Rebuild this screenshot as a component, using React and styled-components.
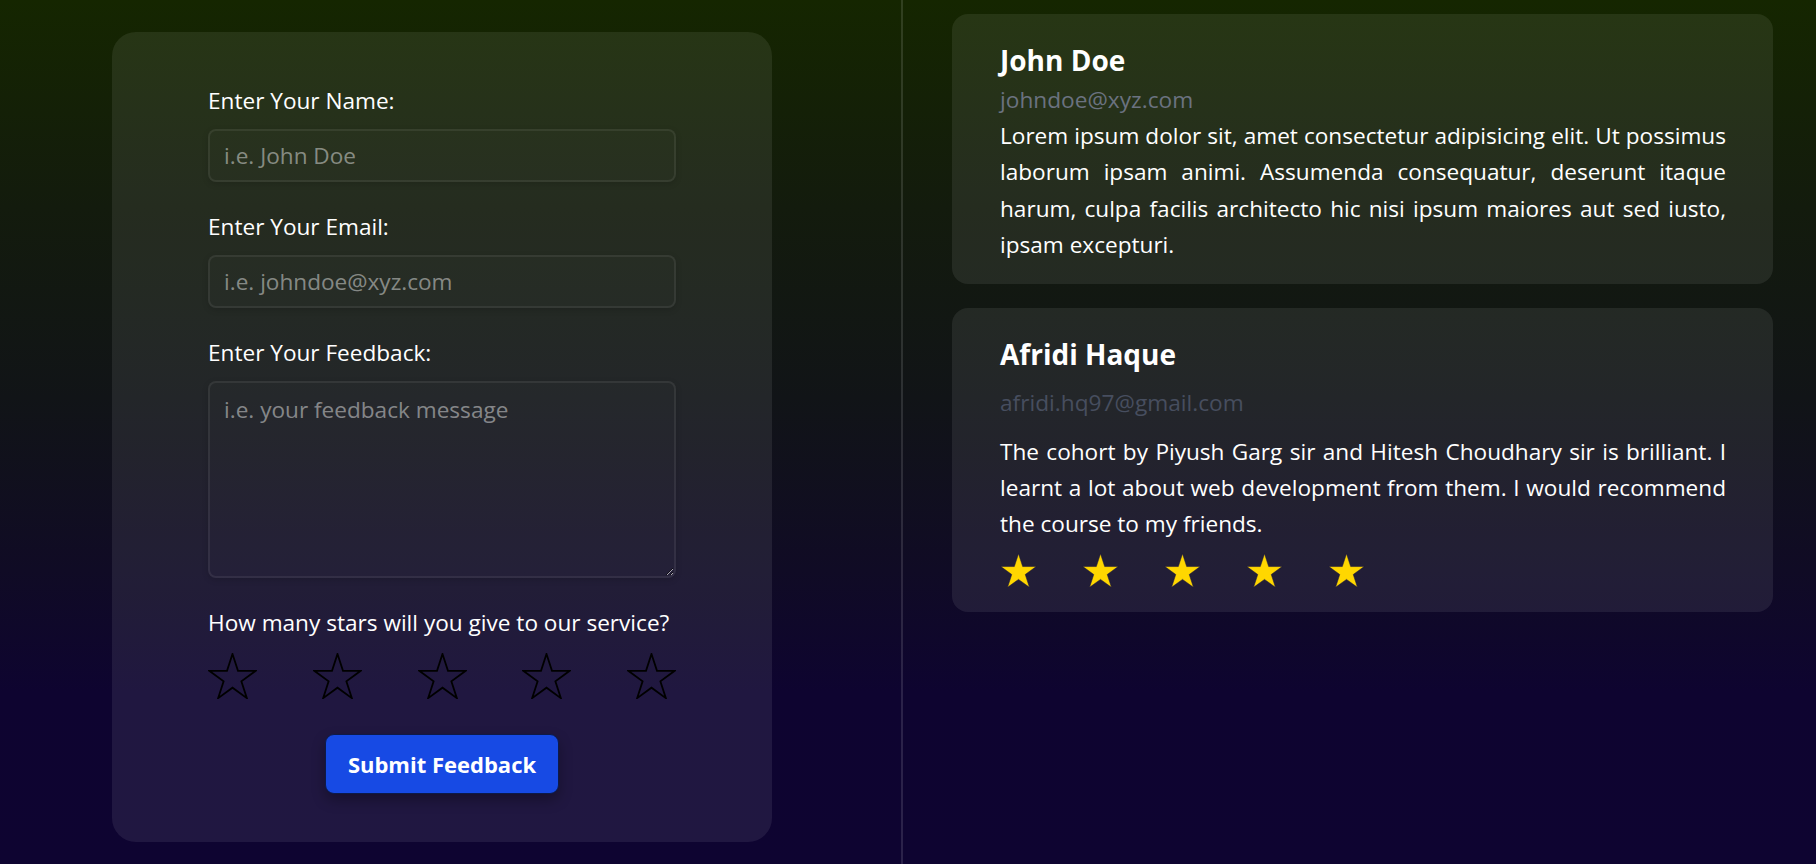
import React from 'react'
import styled, { createGlobalStyle } from 'styled-components'

const reviews = [
    {
        name: 'John Doe',
        email: 'johndoe@xyz.com',
        text: 'Lorem ipsum dolor sit, amet consectetur adipisicing elit. Ut possimus laborum ipsam animi. Assumenda consequatur, deserunt itaque harum, culpa facilis architecto hic nisi ipsum maiores aut sed iusto, ipsam excepturi.',
        stars: 0,
        sample: true,
    },
    {
        name: 'Afridi Haque',
        email: 'afridi.hq97@gmail.com',
        text: 'The cohort by Piyush Garg sir and Hitesh Choudhary sir is brilliant. I learnt a lot about web development from them. I would recommend the course to my friends.',
        stars: 5,
        sample: false,
    },
]

const STAR_POINTS = '50,0 61.81,36.32 100,36.33 69.1,58.77 80.9,95.1 50,72.65 19.1,95.1 30.9,58.77 0,36.33 38.19,36.32'

function Star({ width, height, filled }) {
    return (
        <svg width={width} height={height} viewBox="-2 -2 104 99" aria-hidden="true">
            <polygon
                points={STAR_POINTS}
                fill={filled ? '#ffd700' : 'none'}
                stroke={filled ? '#1b1740' : '#000'}
                strokeWidth={filled ? 1.5 : 3.8}
                strokeLinejoin="miter"
            />
        </svg>
    )
}

export default function App() {
    return (
        <>
            <GlobalStyle />
            <Page>
                <FormSection>
                    <FormCard onSubmit={e => e.preventDefault()}>
                        <Field>
                            <Label htmlFor="name">Enter Your Name:</Label>
                            <Input id="name" type="text" placeholder="i.e. John Doe" />
                        </Field>
                        <Field>
                            <Label htmlFor="email">Enter Your Email:</Label>
                            <Input id="email" type="email" placeholder="i.e. johndoe@xyz.com" />
                        </Field>
                        <Field>
                            <Label htmlFor="feedback">Enter Your Feedback:</Label>
                            <TextArea id="feedback" placeholder="i.e. your feedback message" />
                        </Field>
                        <Field $last>
                            <Label as="p">How many stars will you give to our service?</Label>
                            <RatingRow>
                                {[1, 2, 3, 4, 5].map(n => (
                                    <StarButton key={n} type="button" aria-label={`${n} star`}>
                                        <Star width={49} height={46} />
                                    </StarButton>
                                ))}
                            </RatingRow>
                        </Field>
                        <SubmitButton type="submit">Submit Feedback</SubmitButton>
                    </FormCard>
                </FormSection>

                <Divider />

                <ReviewList>
                    {reviews.map(r => (
                        <ReviewCard key={r.email} $sample={r.sample}>
                            <ReviewName>{r.name}</ReviewName>
                            <ReviewEmail $sample={r.sample}>{r.email}</ReviewEmail>
                            <ReviewText $sample={r.sample}>{r.text}</ReviewText>
                            {r.stars > 0 && (
                                <StarRow>
                                    {Array.from({ length: r.stars }).map((_, i) => (
                                        <Star key={i} width={37} height={35} filled />
                                    ))}
                                </StarRow>
                            )}
                        </ReviewCard>
                    ))}
                </ReviewList>
            </Page>
        </>
    )
}

const GlobalStyle = createGlobalStyle`
    *{
        box-sizing:border-box;
    }
    html, body{
        margin:0;
        padding:0;
    }
    body{
        font-family:"Open Sans", "Noto Sans", sans-serif;
        color:#fff;
        background:#0e0431;
    }
`

const Page = styled.main`
    display:grid;
    grid-template-columns:901px 2px 1fr;
    min-height:100vh;
    background:linear-gradient(180deg, #152600 0%, #131b0d 24%, #111417 46%, #100b25 66%, #0e0430 80%, #0e0431 100%);
`

const FormSection = styled.section`
    padding:32px 0 23px 112px;
`

const FormCard = styled.form`
    width:660px;
    padding:55px 96px 48px;
    border-radius:24px;
    background:rgba(255,255,255,0.08);
    display:flex;
    flex-direction:column;
`

const Field = styled.div`
    display:flex;
    flex-direction:column;
    gap:14px;
    margin-bottom:${p => (p.$last ? '35px' : '31px')};
`

const Label = styled.label`
    margin:0;
    font-size:22.6px;
    line-height:28px;
    color:#fff;
`

const fieldStyles = `
    width:100%;
    font-family:inherit;
    font-size:22.6px;
    color:#fff;
    background:rgba(255,255,255,0.01);
    border:2px solid rgba(255,255,255,0.07);
    border-radius:8px;
    box-shadow:0 2px 6px rgba(0,0,0,0.15);
    outline:none;

    &::placeholder{
        color:rgba(255,255,255,0.45);
    }
`

const Input = styled.input`
    ${fieldStyles}
    height:53px;
    padding:0 14px;
`

const TextArea = styled.textarea`
    ${fieldStyles}
    height:197px;
    padding:12px 14px;
    line-height:30px;
    resize:vertical;
`

const RatingRow = styled.div`
    display:flex;
    justify-content:space-between;
    margin-top:2px;
`

const StarButton = styled.button`
    display:flex;
    padding:0;
    border:none;
    background:none;
    cursor:pointer;
`

const SubmitButton = styled.button`
    align-self:center;
    width:234px;
    height:60px;
    font-family:inherit;
    font-size:22px;
    font-weight:700;
    color:#fff;
    background:#174ae4;
    border:1px solid #0c1a4a;
    border-radius:9px;
    box-shadow:0 6px 14px rgba(0,0,0,0.3);
    cursor:pointer;
`

const Divider = styled.div`
    background:rgba(255,255,255,0.12);
`

const ReviewList = styled.section`
    display:flex;
    flex-direction:column;
    gap:24px;
    padding:14px 43px 0 49px;
`

const ReviewCard = styled.article`
    padding:28px 47px ${p => (p.$sample ? '20px' : '24px')} 48px;
    border-radius:16px;
    background:rgba(255,255,255,0.08);
`

const ReviewName = styled.h2`
    margin:0;
    font-size:28px;
    line-height:36px;
    font-weight:700;
`

const ReviewEmail = styled.p`
    margin:${p => (p.$sample ? '7px 0 0' : '16px 0 0')};
    font-size:22.7px;
    line-height:30px;
    color:${p => (p.$sample ? '#6b7280' : '#474e5f')};
`

const ReviewText = styled.p`
    margin:${p => (p.$sample ? '3px 0 0' : '16px 0 0')};
    font-size:22.6px;
    line-height:36.4px;
    text-align:justify;
`

const StarRow = styled.div`
    display:flex;
    gap:45px;
    margin-top:10px;
`
